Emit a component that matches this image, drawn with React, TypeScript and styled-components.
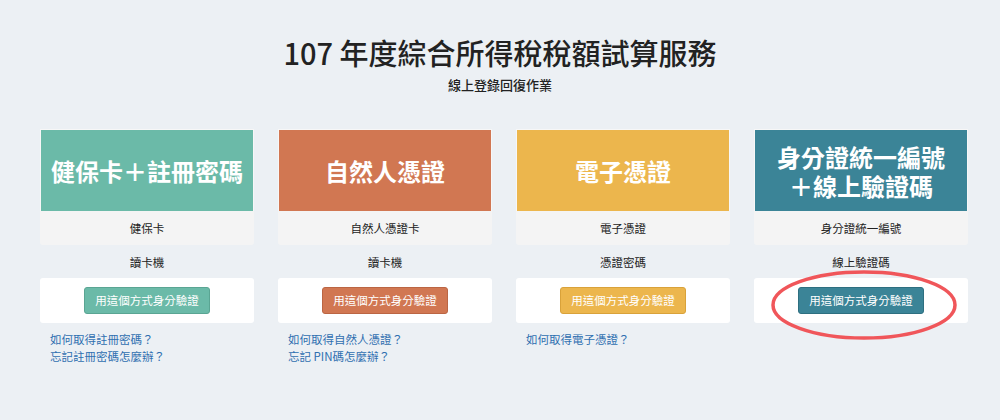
import React from "react";
import styled, { createGlobalStyle } from "styled-components";

const Global = createGlobalStyle`
  html, body { margin: 0; padding: 0; background: #ecf0f4; }
  body { font-family: "Noto Sans CJK TC", "Noto Sans", sans-serif; color: #222; }
  * { box-sizing: border-box; }
`;

const Page = styled.div`
  width: 1000px;
  height: 420px;
  padding-top: 33px;
`;

const Title = styled.h1`
  margin: 0;
  text-align: center;
  font-size: 29px;
  line-height: 38px;
  font-weight: 500;
  color: #222;
`;

const Subtitle = styled.h2`
  margin: 5px 0 0;
  text-align: center;
  font-size: 13px;
  line-height: 18px;
  font-weight: 500;
  color: #222;
`;

const Grid = styled.div`
  margin: 35px 0 0 40px;
  width: 928px;
  display: grid;
  grid-template-columns: repeat(4, 1fr);
  column-gap: 24px;
`;

const Card = styled.div`
  position: relative;
  display: flex;
  flex-direction: column;
`;

const Head = styled.div<{ $bg: string }>`
  height: 82px;
  background: ${(p) => p.$bg};
  border: 1px solid #f7f7f7;
  border-bottom: none;
  display: flex;
  align-items: center;
  justify-content: center;
  text-align: center;
  color: #fff;
  font-size: 24px;
  line-height: 29px;
  font-weight: 700;
`;

const GrayRow = styled.div`
  height: 34px;
  background: #f4f4f4;
  border-radius: 0 0 3px 3px;
  display: flex;
  align-items: center;
  justify-content: center;
  font-size: 11.5px;
  color: #222;
`;

const PlainRow = styled.div`
  height: 33px;
  display: flex;
  align-items: center;
  justify-content: center;
  font-size: 11.5px;
  color: #222;
`;

const ButtonRow = styled.div`
  height: 45px;
  background: #fff;
  border-radius: 3px;
  display: flex;
  justify-content: center;
  padding-top: 9px;
`;

const Button = styled.button<{ $bg: string; $border: string }>`
  height: 27px;
  padding: 0 10px;
  background: ${(p) => p.$bg};
  border: 1px solid ${(p) => p.$border};
  border-radius: 3px;
  color: #fff;
  font-family: "Noto Sans CJK TC", sans-serif;
  font-size: 11.5px;
  line-height: 25px;
  cursor: pointer;
`;

const Links = styled.div`
  padding: 8px 0 0 10px;
  display: flex;
  flex-direction: column;
`;

const Link = styled.a`
  color: #2f6fb0;
  font-size: 11.5px;
  line-height: 17px;
  text-decoration: none;
`;

const Ring = styled.svg`
  position: absolute;
  left: 14px;
  top: 139px;
  pointer-events: none;
`;

type CardData = {
  title: React.ReactNode;
  color: string;
  border: string;
  item1: string;
  item2: string;
  links: string[];
  ring?: boolean;
};

const cards: CardData[] = [
  {
    title: "健保卡＋註冊密碼",
    color: "#6bbaa8",
    border: "#5aa593",
    item1: "健保卡",
    item2: "讀卡機",
    links: ["如何取得註冊密碼？", "忘記註冊密碼怎麼辦？"],
  },
  {
    title: "自然人憑證",
    color: "#d17752",
    border: "#bb6543",
    item1: "自然人憑證卡",
    item2: "讀卡機",
    links: ["如何取得自然人憑證？", "忘記 PIN碼怎麼辦？"],
  },
  {
    title: "電子憑證",
    color: "#ecb64d",
    border: "#d9a23a",
    item1: "電子憑證",
    item2: "憑證密碼",
    links: ["如何取得電子憑證？"],
  },
  {
    title: (
      <>
        身分證統一編號
        <br />
        ＋線上驗證碼
      </>
    ),
    color: "#3b8497",
    border: "#2e6f80",
    item1: "身分證統一編號",
    item2: "線上驗證碼",
    links: [],
    ring: true,
  },
];

export default function App() {
  return (
    <Page>
      <Global />
      <Title>107 年度綜合所得稅稅額試算服務</Title>
      <Subtitle>線上登錄回復作業</Subtitle>
      <Grid>
        {cards.map((c, i) => (
          <Card key={i}>
            <Head $bg={c.color}>
              <div>{c.title}</div>
            </Head>
            <GrayRow>{c.item1}</GrayRow>
            <PlainRow>{c.item2}</PlainRow>
            <ButtonRow>
              <Button $bg={c.color} $border={c.border}>
                用這個方式身分驗證
              </Button>
            </ButtonRow>
            <Links>
              {c.links.map((l) => (
                <Link key={l} href="#">
                  {l}
                </Link>
              ))}
            </Links>
            {c.ring && (
              <Ring width="192" height="74" viewBox="0 0 192 74">
                <ellipse cx="96" cy="37" rx="91" ry="33" fill="none" stroke="#f0565a" strokeWidth="3.5" />
              </Ring>
            )}
          </Card>
        ))}
      </Grid>
    </Page>
  );
}
